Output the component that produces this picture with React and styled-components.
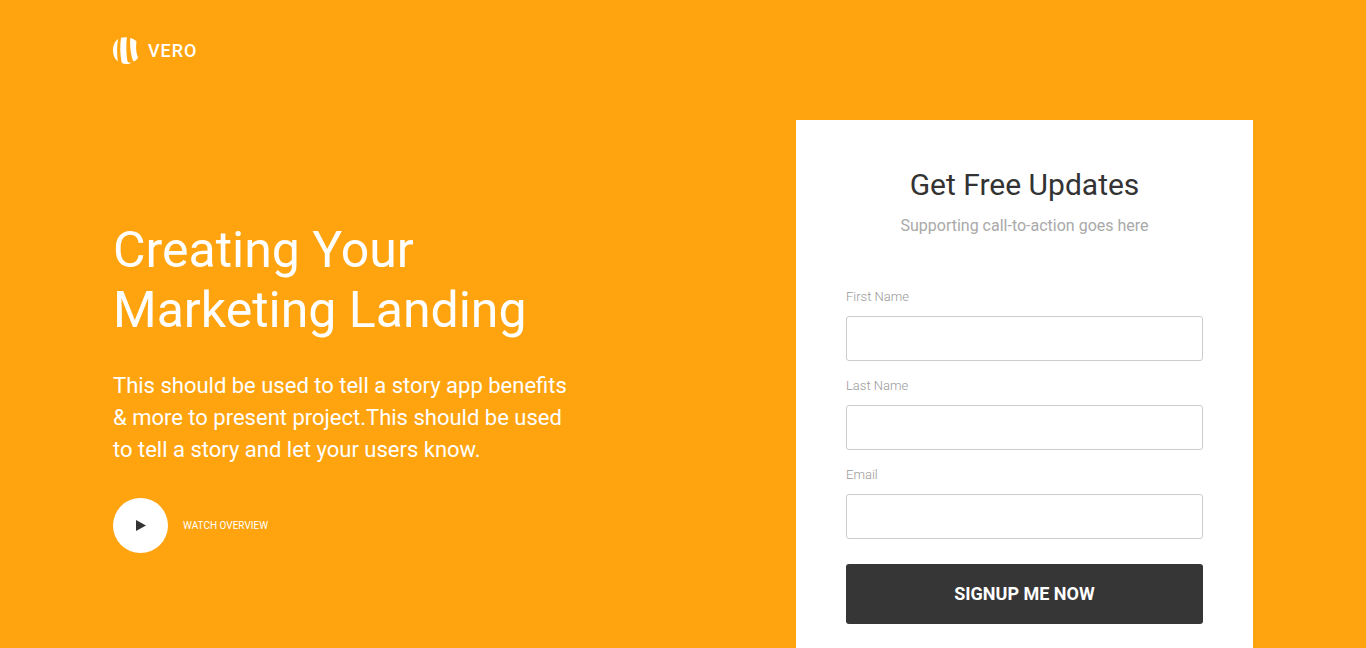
import React from "react";
import styled, { createGlobalStyle } from "styled-components";

const GlobalStyle = createGlobalStyle`
  *, *::before, *::after { box-sizing: border-box; }
  body {
    margin: 0;
    background: #ffa40f;
    color: #fff;
    font-family: Roboto, "Liberation Sans", sans-serif;
  }
`;

const Page = styled.div`
  display: flex;
  flex-direction: column;
  min-height: 100vh;
  width: 100%;
  max-width: 1170px;
  margin: 0 auto;
  padding: 0 15px;
`;

const Header = styled.header`
  display: flex;
  align-items: center;
  padding: 36px 0;
  margin-bottom: 18px;
`;

const Brand = styled.a`
  display: flex;
  align-items: center;
  gap: 10px;
  color: #fff;
  font-size: 18px;
  line-height: 30px;
  font-weight: 500;
  letter-spacing: 1px;
  text-decoration: none;
`;

const Hero = styled.main`
  flex: 1;
  display: grid;
  grid-template-columns: minmax(0, 457px) minmax(0, 457px);
  justify-content: space-between;
  gap: 30px;

  @media (max-width: 800px) {
    grid-template-columns: minmax(0, 1fr);
  }
`;

const Intro = styled.section`
  padding-top: 100px;
`;

const Headline = styled.h1`
  margin: 0 0 30px;
  font-size: 50px;
  line-height: 60px;
  font-weight: 400;
`;

const Lead = styled.p`
  margin: 0 0 32px;
  font-size: 22px;
  line-height: 32px;
`;

const WatchButton = styled.button`
  display: flex;
  align-items: center;
  gap: 15px;
  padding: 0;
  border: 0;
  background: none;
  color: #fff;
  font: 400 10px/16px Roboto, "Liberation Sans", sans-serif;
  text-transform: uppercase;
  cursor: pointer;
`;

const PlayDisc = styled.span`
  display: flex;
  align-items: center;
  justify-content: center;
  width: 55px;
  height: 55px;
  border-radius: 50%;
  background: #fff;
`;

const Card = styled.form`
  display: flex;
  flex-direction: column;
  padding: 44px 50px 24px;
  background: #fff;
`;

const CardTitle = styled.h2`
  margin: 0 0 8px;
  color: #333;
  font-size: 30px;
  line-height: 42px;
  font-weight: 400;
  text-align: center;
`;

const CardText = styled.p`
  margin: 0 0 50px;
  color: #a9a9a9;
  font-size: 16px;
  line-height: 24px;
  text-align: center;
`;

const Field = styled.div`
  display: flex;
  flex-direction: column;
  gap: 10px;
  margin-bottom: 16px;
`;

const Label = styled.label`
  color: #999;
  font-size: 13px;
  line-height: 18px;
  font-weight: 300;
`;

const Input = styled.input`
  width: 100%;
  height: 45px;
  padding: 0 12px;
  border: 1px solid #ccc;
  border-radius: 3px;
  background: #fff;
  color: #333;
  font: 400 16px Roboto, "Liberation Sans", sans-serif;
`;

const SubmitButton = styled.button`
  height: 60px;
  margin-top: 9px;
  border: 0;
  border-radius: 3px;
  background: #363636;
  color: #fff;
  font: 700 18px/24px Roboto, "Liberation Sans", sans-serif;
  text-transform: uppercase;
  cursor: pointer;
`;

const fields = [
  { id: "first-name", label: "First Name", type: "text" },
  { id: "last-name", label: "Last Name", type: "text" },
  { id: "email", label: "Email", type: "email" },
];

function LogoMark() {
  return (
    <svg width="25" height="28" viewBox="0 0 25 28" fill="#fff" aria-hidden="true">
      <path d="M5 2C1.500 4.500 0 9 0 13.500S1.500 22 4.800 24.500C3.800 17 3.900 9 5 2Z" />
      <path d="M8 0.800C9.800 0.200 12 0 13.800 0.200C13 9 13.200 18 14.500 24.500C15.500 25.700 17 25.800 18.500 25.500C16 27.500 11.500 27.500 8.800 26C7 18 6.800 9 8 0.800Z" />
      <path d="M17.300 1C19.500 1.500 22 2.500 23.500 4.500C22.600 10.500 23 16 25 20.500C24 22.500 22.500 24 20.500 24.500C17.700 19 16.700 9 17.300 1Z" />
    </svg>
  );
}

export default function App() {
  return (
    <>
      <GlobalStyle />
      <Page>
        <Header>
          <Brand href="#">
            <LogoMark />
            VERO
          </Brand>
        </Header>
        <Hero>
          <Intro>
            <Headline>Creating Your Marketing Landing</Headline>
            <Lead>
              This should be used to tell a story app benefits &amp; more to present
              project.This should be used to tell a story and let your users know.
            </Lead>
            <WatchButton type="button">
              <PlayDisc>
                <svg width="10" height="11" viewBox="0 0 10 11" aria-hidden="true">
                  <path d="M0 0L10 5.500L0 11Z" fill="#333" />
                </svg>
              </PlayDisc>
              Watch Overview
            </WatchButton>
          </Intro>
          <Card onSubmit={(event) => event.preventDefault()}>
            <CardTitle>Get Free Updates</CardTitle>
            <CardText>Supporting call-to-action goes here</CardText>
            {fields.map(({ id, label, type }) => (
              <Field key={id}>
                <Label htmlFor={id}>{label}</Label>
                <Input id={id} name={id} type={type} />
              </Field>
            ))}
            <SubmitButton type="submit">Signup me now</SubmitButton>
          </Card>
        </Hero>
      </Page>
    </>
  );
}
